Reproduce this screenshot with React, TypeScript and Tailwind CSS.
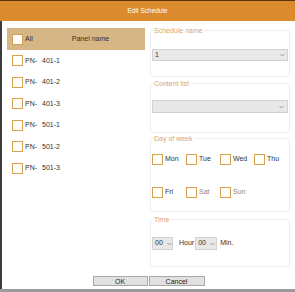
const font = "font-['Liberation_Sans',Arial,sans-serif]";

const panels = ["401-1", "401-2", "401-3", "501-1", "501-2", "501-3"];

function Box() {
  return <span className="block w-[11px] h-[11px] shrink-0 border border-[#d9a04f] bg-white" />;
}

function Chevron() {
  return (
    <svg width="5" height="4" viewBox="0 0 5 4" className="shrink-0">
      <path d="M0.5 1 L2.5 3 L4.5 1" fill="none" stroke="#888" strokeWidth="0.8" />
    </svg>
  );
}

function Group({ title, className, children }: { title: string; className: string; children: React.ReactNode }) {
  return (
    <div className={`relative border border-[#efefef] rounded-[2px] ${className}`}>
      <span className="absolute -top-[5px] left-[2px] bg-white px-[1px] text-[7px] leading-[9px] text-[#dba66b]">
        {title}
      </span>
      {children}
    </div>
  );
}

function Day({ label, muted }: { label: string; muted?: boolean }) {
  return (
    <div className="flex items-center gap-[2px]">
      <Box />
      <span className={`text-[7px] ${muted ? "text-[#8a8a8a]" : "text-[#333]"}`}>{label}</span>
    </div>
  );
}

export default function App() {
  return (
    <div className={`w-[295px] h-[292px] flex flex-col bg-white overflow-hidden ${font}`}>
      <div className="h-[21px] shrink-0 border-t border-[#5a3212] bg-[#db8b2d] flex items-center justify-center">
        <span className="text-[6.5px] text-white">Edit Schedule</span>
      </div>

      <div className="flex-1 flex flex-col border-l-2 border-[#3c3c3c]">
        <div className="flex-1 flex">
          <div className="pl-[5px] pt-[7px] w-[143px] shrink-0">
            <div className="h-[22px] bg-[#d6b684] flex items-center pl-[5px]">
              <Box />
              <span className="ml-[2px] text-[7px] text-[#333]">All</span>
              <span className="ml-[39px] text-[7px] text-[#333]">Panel name</span>
            </div>
            {panels.map((p) => (
              <div key={p} className="h-[21.5px] flex items-center pl-[5px] text-[7px] text-[#333]">
                <Box />
                <span className="ml-[2px] w-[17px]">PN-</span>
                <span>{p}</span>
              </div>
            ))}
          </div>

          <div className="ml-[5px] pt-[9px] w-[140px] flex flex-col">
            <Group title="Schedule name" className="h-[47px] pt-[18px] pl-[1px] pr-[1px]">
              <div className="h-[12px] bg-[#e8e8e8] border border-[#d2d2d2] flex items-center justify-between px-[2px]">
                <span className="text-[7px] text-[#333]">1</span>
                <Chevron />
              </div>
            </Group>

            <Group title="Content list" className="mt-[6px] h-[50px] pt-[16px] pl-[1px] pr-[1px]">
              <div className="h-[13px] bg-[#e8e8e8] border border-[#d2d2d2] flex items-center justify-end px-[3px]">
                <Chevron />
              </div>
            </Group>

            <Group title="Day of week" className="mt-[5px] h-[74px] pt-[15px] pl-[1px]">
              <div className="grid grid-cols-[34px_34px_34px_34px] gap-y-[22px]">
                <Day label="Mon" />
                <Day label="Tue" />
                <Day label="Wed" />
                <Day label="Thu" />
                <Day label="Fri" />
                <Day label="Sat" muted />
                <Day label="Sun" muted />
              </div>
            </Group>

            <Group title="Time" className="mt-[7px] h-[48px] pt-[17px] pl-[1px]">
              <div className="flex items-center text-[7px] text-[#333]">
                <div className="w-[21px] h-[13px] bg-[#e8e8e8] border border-[#d2d2d2] flex items-center gap-[4px] px-[2px]">
                  <span>00</span>
                  <Chevron />
                </div>
                <span className="ml-[6px] mr-[1px]">Hour</span>
                <div className="w-[22px] h-[13px] bg-[#e8e8e8] border border-[#d2d2d2] flex items-center gap-[4px] px-[2px]">
                  <span>00</span>
                  <Chevron />
                </div>
                <span className="ml-[3px]">Min.</span>
              </div>
            </Group>
          </div>
        </div>

        <div className="h-[13px] shrink-0 flex justify-center gap-[1px]">
          <button className="w-[55px] h-[10px] bg-[#e1e1e1] border border-[#a9a9a9] text-[7px] leading-none text-[#222]">OK</button>
          <button className="w-[56px] h-[10px] bg-[#e1e1e1] border border-[#a9a9a9] text-[7px] leading-none text-[#222]">Cancel</button>
        </div>
      </div>
      <div className="h-[3px] shrink-0 bg-[#9b9b9b]" />
    </div>
  );
}
